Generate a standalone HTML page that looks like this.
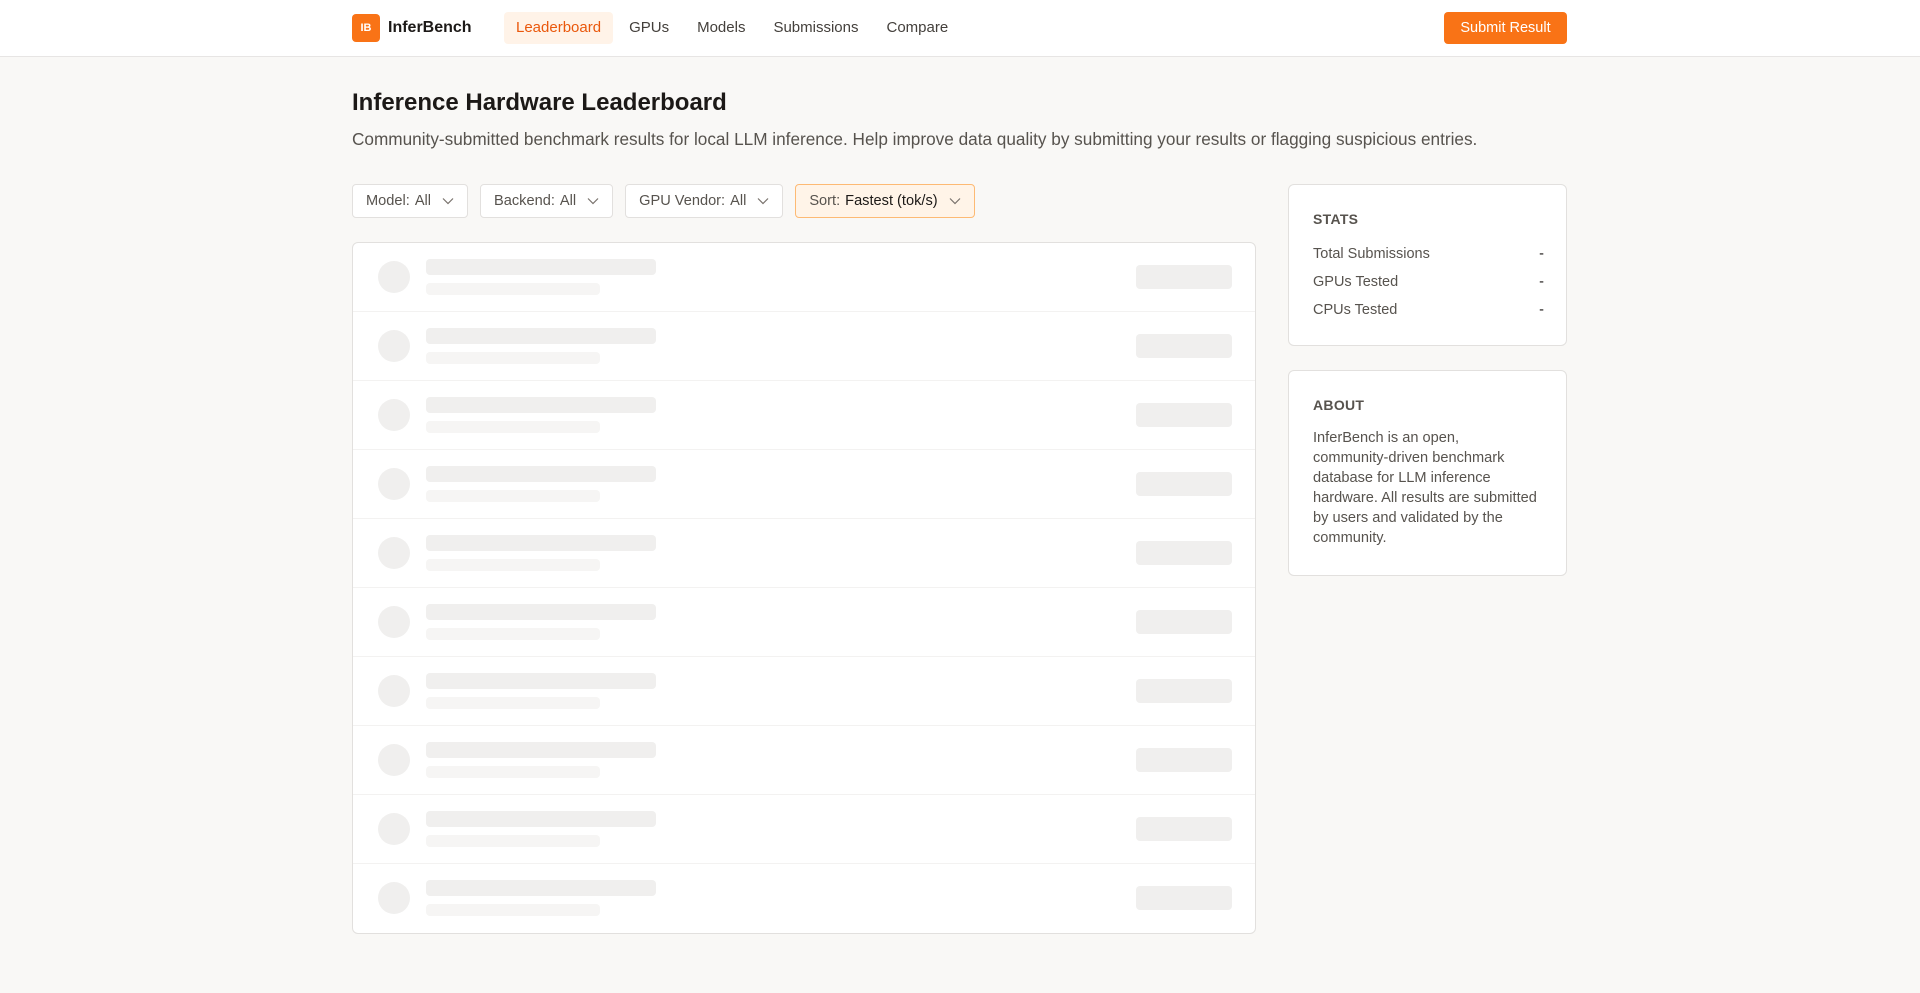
<!DOCTYPE html>
<html><head><meta charset="utf-8"><style>
*{box-sizing:border-box;margin:0;padding:0}
body{width:1920px;height:993px;background:#f9f8f6;font-family:"Liberation Sans",sans-serif;color:#1c1917;overflow:hidden}
.hdr{height:57px;background:#fff;border-bottom:1px solid #e7e5e4;position:relative}
.logo{position:absolute;left:352px;top:14px;width:28px;height:28px;background:#f97316;border-radius:4px;color:#fff;font-size:11px;font-weight:bold;text-align:center;line-height:28px}
.brand{position:absolute;left:388px;top:19px;font-size:16px;font-weight:bold}
.nav{position:absolute;left:504px;top:12px;display:flex;gap:4px}
.nav a{display:block;padding:0 12px;height:32px;line-height:32px;font-size:15px;color:#44403c;text-decoration:none;border-radius:4px}
.nav a.on{background:#fff3e8;color:#ea580c}
.sub{position:absolute;left:1444px;top:12px;width:123px;height:32px;background:#f97316;color:#fff;border-radius:4px;font-size:14.5px;text-align:center;line-height:32px}
h1{position:absolute;left:352px;top:89px;font-size:24px;font-weight:bold}
.desc{position:absolute;left:352px;top:129px;font-size:17.2px;color:#57534e}
.filters{position:absolute;left:352px;top:184px;display:flex;gap:12px}
.f{height:34px;background:#fff;border:1px solid #e2e0de;border-radius:4px;padding:0 13px;font-size:14.6px;color:#57534e;line-height:32px;display:flex;align-items:center;gap:5px}
.f b{font-weight:normal;color:#57534e}
.f.s{background:#fff4e8;border-color:#fdba74}
.f.s b{color:#1c1917}
.f svg{margin-left:6px}
.panel{position:absolute;left:352px;top:242px;width:904px;height:692px;background:#fff;border:1px solid #e2e0de;border-radius:6px;overflow:hidden}
.row{height:69px;border-bottom:1px solid #f3f2f1;position:relative}
.row:last-child{border-bottom:none}
.c{position:absolute;left:25px;top:18px;width:32px;height:32px;border-radius:50%;background:#f0efee}
.b1{position:absolute;left:73px;top:16px;width:230px;height:16px;border-radius:4px;background:#f0efee}
.b2{position:absolute;left:73px;top:40px;width:174px;height:12px;border-radius:4px;background:#f6f5f4}
.b3{position:absolute;left:783px;top:22px;width:96px;height:24px;border-radius:4px;background:#f0efee}
.card{position:absolute;left:1288px;width:279px;background:#fff;border:1px solid #e2e0de;border-radius:6px;padding:0 22px 0 24px}
.card h3{font-size:14px;font-weight:bold;color:#57534e;margin-top:26px;margin-bottom:19px;letter-spacing:.3px}
.kv{display:flex;justify-content:space-between;font-size:14.5px;color:#57534e;height:28px}
.kv span:last-child{color:#1c1917}
.card p{font-size:14.6px;color:#57534e;line-height:20px;margin-top:-4px}
</style></head><body>
<div class="hdr">
<div class="logo">IB</div><div class="brand">InferBench</div>
<div class="nav"><a class="on">Leaderboard</a><a>GPUs</a><a>Models</a><a>Submissions</a><a>Compare</a></div>
<div class="sub">Submit Result</div>
</div>
<h1>Inference Hardware Leaderboard</h1>
<div class="desc">Community-submitted benchmark results for local LLM inference. Help improve data quality by submitting your results or flagging suspicious entries.</div>
<div class="filters">
<div class="f">Model: <b>All</b><svg width="12" height="8" viewBox="0 0 12 8"><path d="M1 1.5l5 5 5-5" fill="none" stroke="#78716c" stroke-width="1.2"/></svg></div>
<div class="f">Backend: <b>All</b><svg width="12" height="8" viewBox="0 0 12 8"><path d="M1 1.5l5 5 5-5" fill="none" stroke="#78716c" stroke-width="1.2"/></svg></div>
<div class="f">GPU Vendor: <b>All</b><svg width="12" height="8" viewBox="0 0 12 8"><path d="M1 1.5l5 5 5-5" fill="none" stroke="#78716c" stroke-width="1.2"/></svg></div>
<div class="f s">Sort: <b>Fastest (tok/s)</b><svg width="12" height="8" viewBox="0 0 12 8"><path d="M1 1.5l5 5 5-5" fill="none" stroke="#78716c" stroke-width="1.2"/></svg></div>
</div>
<div class="panel">
<div class="row"><i class="c"></i><i class="b1"></i><i class="b2"></i><i class="b3"></i></div>
<div class="row"><i class="c"></i><i class="b1"></i><i class="b2"></i><i class="b3"></i></div>
<div class="row"><i class="c"></i><i class="b1"></i><i class="b2"></i><i class="b3"></i></div>
<div class="row"><i class="c"></i><i class="b1"></i><i class="b2"></i><i class="b3"></i></div>
<div class="row"><i class="c"></i><i class="b1"></i><i class="b2"></i><i class="b3"></i></div>
<div class="row"><i class="c"></i><i class="b1"></i><i class="b2"></i><i class="b3"></i></div>
<div class="row"><i class="c"></i><i class="b1"></i><i class="b2"></i><i class="b3"></i></div>
<div class="row"><i class="c"></i><i class="b1"></i><i class="b2"></i><i class="b3"></i></div>
<div class="row"><i class="c"></i><i class="b1"></i><i class="b2"></i><i class="b3"></i></div>
<div class="row"><i class="c"></i><i class="b1"></i><i class="b2"></i><i class="b3"></i></div>
</div>
<div class="card" style="top:184px;height:162px">
<h3>STATS</h3>
<div class="kv"><span>Total Submissions</span><span>-</span></div>
<div class="kv"><span>GPUs Tested</span><span>-</span></div>
<div class="kv"><span>CPUs Tested</span><span>-</span></div>
</div>
<div class="card" style="top:370px;height:206px">
<h3>ABOUT</h3>
<p>InferBench is an open,<br>community-driven benchmark<br>database for LLM inference<br>hardware. All results are submitted<br>by users and validated by the<br>community.</p>
</div>
</body></html>
